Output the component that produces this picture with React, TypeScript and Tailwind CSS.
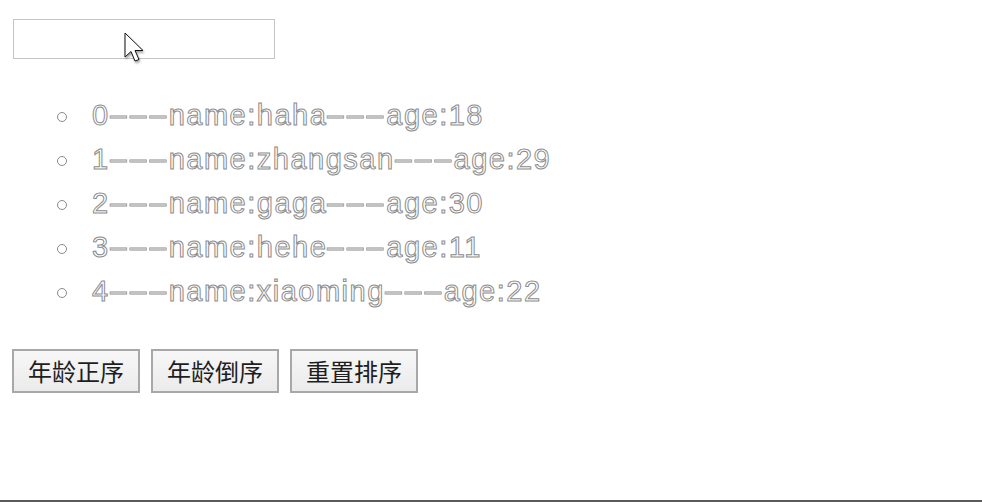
const people = [
  { name: "haha", age: 18 },
  { name: "zhangsan", age: 29 },
  { name: "gaga", age: 30 },
  { name: "hehe", age: 11 },
  { name: "xiaoming", age: 22 },
]

const buttons = ["年龄正序", "年龄倒序", "重置排序"]

function Cursor() {
  return (
    <svg
      className="absolute left-[124px] top-[32px] drop-shadow-[1px_2px_1px_rgba(0,0,0,0.35)]"
      width="22"
      height="34"
      viewBox="0 0 22 34"
    >
      <path
        d="M1 1 L1 25 L7 19.5 L11 29 L15 27.5 L11 18.5 L19 18.5 Z"
        fill="white"
        stroke="#111"
        strokeWidth="1"
        strokeLinejoin="round"
      />
    </svg>
  )
}

// em dashes drawn a bit narrower, like the reference
function Dashes() {
  return (
    <span className="inline-block tracking-[5px] scale-x-[0.58] origin-left mr-[-43px]">———</span>
  )
}

export default function App() {
  return (
    <div className="h-[502px] flex flex-col bg-white font-['Liberation_Sans',Arial,sans-serif]">
      <div className="relative pl-[12px] pt-[19px]">
        <input className="ml-[1px] block w-[262px] h-[40px] border border-[#c4c4c4] outline-none" />
        <Cursor />

        <ul className="mt-[35px] pl-[45px]">
          {people.map((p, i) => (
            <li key={i} className="flex items-center h-[44px]">
              <span className="w-[10px] h-[10px] mt-[2px] rounded-full border border-[#8a8a8a] shrink-0" />
              <span className="ml-[25px] text-[29px] text-white [-webkit-text-stroke:1px_#8c8c8c] tracking-[1.5px] whitespace-nowrap">
                {i}
                <Dashes />
                name:{p.name}
                <Dashes />
                age:{p.age}
              </span>
            </li>
          ))}
        </ul>

        <div className="mt-[35px] flex gap-[11px]">
          {buttons.map((b) => (
            <button
              key={b}
              className="w-[128px] h-[44px] border-2 border-[#a8a8a8] bg-gradient-to-b from-[#f7f7f7] to-[#ebebeb] text-[24px] text-[#1e1e1e] font-['Noto_Sans_CJK_SC',sans-serif]"
            >
              {b}
            </button>
          ))}
        </div>
      </div>
      <div className="mt-auto h-[2px] bg-[#5b5b5b]" />
    </div>
  )
}
